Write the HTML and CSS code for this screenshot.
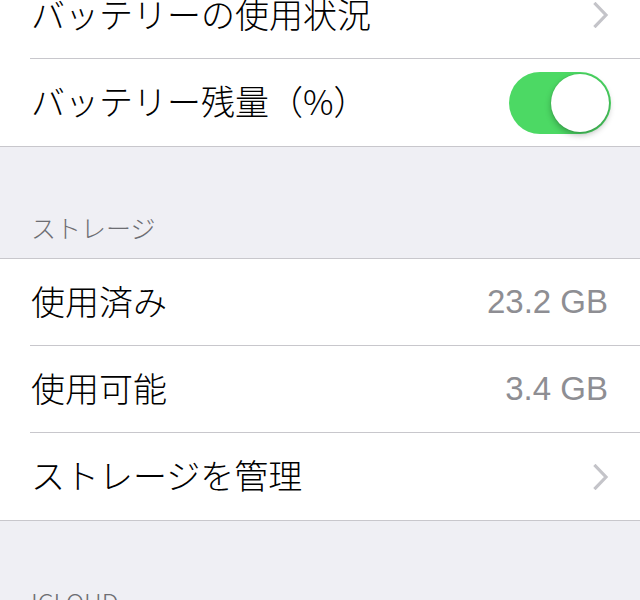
FILE: index.html
```html
<!DOCTYPE html>
<html lang="ja">
<head>
<meta charset="utf-8">
<title>バッテリー / ストレージ</title>
<link rel="stylesheet" href="styles.css">
</head>
<body>
<div class="screen">
  <div class="group group-first">
    <div class="row">
      <div class="inner">
        <span class="label">バッテリーの使用状況</span>
        <svg class="chevron" width="16" height="26" viewBox="0 0 16 26"><polyline points="2.5,2 13,13 2.5,24" fill="none" stroke="#c4c4c9" stroke-width="3.2" stroke-linecap="square" stroke-linejoin="miter"/></svg>
      </div>
    </div>
    <div class="row">
      <div class="inner">
        <span class="label">バッテリー残量（%）</span>
        <div class="switch on"><div class="knob"></div></div>
      </div>
    </div>
  </div>

  <div class="section-header">ストレージ</div>

  <div class="group">
    <div class="row">
      <div class="inner">
        <span class="label">使用済み</span>
        <span class="value">23.2 GB</span>
      </div>
    </div>
    <div class="row">
      <div class="inner">
        <span class="label">使用可能</span>
        <span class="value">3.4 GB</span>
      </div>
    </div>
    <div class="row">
      <div class="inner">
        <span class="label">ストレージを管理</span>
        <svg class="chevron" width="16" height="26" viewBox="0 0 16 26"><polyline points="2.5,2 13,13 2.5,24" fill="none" stroke="#c4c4c9" stroke-width="3.2" stroke-linecap="square" stroke-linejoin="miter"/></svg>
      </div>
    </div>
  </div>

  <div class="section-header">ICLOUD</div>
</div>
</body>
</html>
```

FILE: styles.css
```css
html, body {
  margin: 0;
  padding: 0;
  background: #efeff4;
  overflow: hidden;
}

.screen {
  width: 640px;
  height: 600px;
  overflow: hidden;
  font-family: "Noto Sans CJK JP", "Noto Sans", sans-serif;
  color: #000;
}

.group {
  background: #fff;
  border-top: 1px solid #c8c7cc;
  border-bottom: 1px solid #c8c7cc;
}

.group-first {
  border-top: none;
  margin-top: -28px;
}

.row {
  padding-left: 30px;
}

.inner {
  height: 87px;
  box-sizing: border-box;
  border-bottom: 1px solid #c8c7cc;
  padding-right: 30px;
  display: flex;
  align-items: center;
  justify-content: space-between;
}

.row:last-child .inner {
  border-bottom: none;
}

.label {
  font-size: 34px;
  font-weight: 300;
  line-height: 40px;
  padding-bottom: 3px;
  padding-left: 1px;
}

.value {
  font-family: "Liberation Sans", Arial, sans-serif;
  font-size: 33px;
  line-height: 40px;
  color: #8e8e93;
  padding-right: 2px;
}

.chevron {
  display: block;
  margin-right: 1px;
}

.switch {
  width: 102px;
  height: 62px;
  box-sizing: border-box;
  border-radius: 31px;
  background: #4cd964;
  padding: 2px;
  display: flex;
  justify-content: flex-end;
  margin-right: -1px;
}

.knob {
  width: 58px;
  height: 58px;
  border-radius: 50%;
  background: #fff;
  box-shadow: 0 3px 6px rgba(0, 0, 0, 0.28), 0 0 0 1px rgba(0, 0, 0, 0.04);
}

.section-header {
  height: 111px;
  box-sizing: border-box;
  padding: 65px 30px 16px 31px;
  font-size: 25px;
  font-weight: 300;
  line-height: 30px;
  color: #6d6d72;
}
```
